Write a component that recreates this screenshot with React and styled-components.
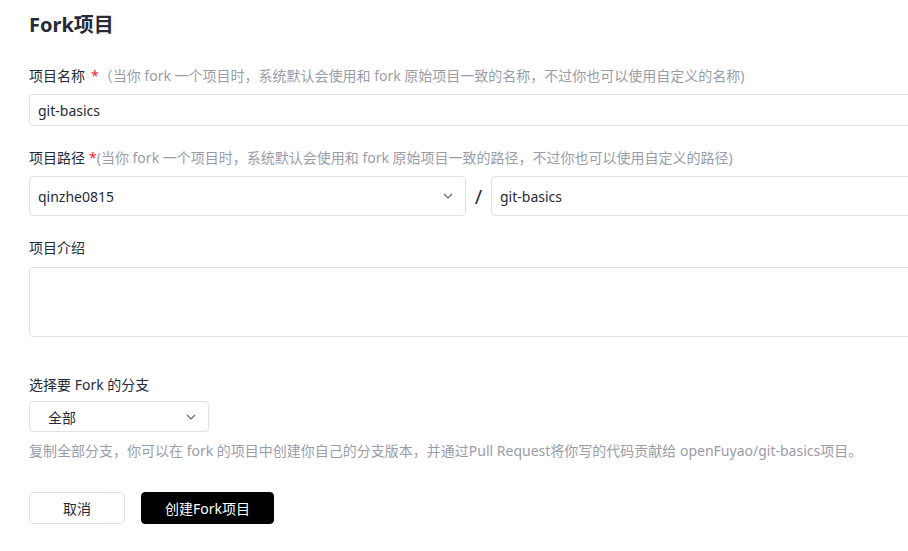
import React from 'react'
import styled, { createGlobalStyle } from 'styled-components'

const GlobalStyle = createGlobalStyle`
  html, body {
    margin: 0;
    padding: 0;
    background: #fff;
    overflow: hidden;
  }
  body {
    font-family: "Noto Sans", "Noto Sans CJK SC", sans-serif;
    color: #252b3a;
  }
`

const Page = styled.div`
  padding: 10px 0 0 29px;
  width: 980px;
`

const Title = styled.h2`
  margin: 0 0 26px;
  font-size: 20px;
  font-weight: 700;
  line-height: 30px;
  color: #252b3a;
`

const Field = styled.div`
  margin-bottom: ${({ gap = 22 }) => gap}px;
`

const Label = styled.div`
  font-size: 14px;
  line-height: 20px;
  margin-bottom: ${({ mb = 8 }) => mb}px;
  color: #252b3a;
  white-space: nowrap;
`

const Star = styled.span`
  color: #f5222d;
  margin-left: ${({ spaced }) => (spaced ? '6px' : '4px')};
`

const Hint = styled.span`
  color: #9a9caa;
`

const Input = styled.div`
  box-sizing: border-box;
  height: ${({ h = 32 }) => h}px;
  border: 1px solid #dfe1e8;
  border-radius: 4px;
  padding: 0 8px;
  display: flex;
  align-items: center;
  font-size: 14px;
  color: #252b3a;
  flex: ${({ grow }) => (grow ? '1' : 'none')};
  width: ${({ w }) => (w ? `${w}px` : 'auto')};
`

const Row = styled.div`
  display: flex;
  align-items: center;
`

const Slash = styled.span`
  width: 25px;
  text-align: center;
  font-size: 20px;
  color: #252b3a;
`

const Select = styled(Input)`
  justify-content: space-between;
  padding: 0 12px 0 ${({ pl = 8 }) => pl}px;
`

const Arrow = () => (
  <svg width="10" height="6" viewBox="0 0 10 6" fill="none">
    <path d="M1 1l4 4 4-4" stroke="#5e6270" strokeWidth="1.1" />
  </svg>
)

const TextArea = styled.div`
  box-sizing: border-box;
  height: 70px;
  border: 1px solid #dfe1e8;
  border-radius: 4px;
`

const Help = styled.div`
  margin-top: 9px;
  font-size: 14px;
  line-height: 20px;
  color: #9a9caa;
  white-space: nowrap;
`

const Actions = styled.div`
  display: flex;
  gap: 16px;
  margin-top: 31px;
`

const Button = styled.button`
  box-sizing: border-box;
  height: 32px;
  width: ${({ w }) => w}px;
  border-radius: 4px;
  font-family: inherit;
  font-size: 14px;
  cursor: pointer;
  border: 1px solid ${({ primary }) => (primary ? '#000' : '#dfe1e8')};
  background: ${({ primary }) => (primary ? '#000' : '#fff')};
  color: ${({ primary }) => (primary ? '#fff' : '#252b3a')};
`

export default function App() {
  return (
    <>
      <GlobalStyle />
      <Page>
        <Title>Fork项目</Title>
        <Field gap={22}>
          <Label>
            项目名称<Star spaced>*</Star>
            <Hint>（当你 fork 一个项目时，系统默认会使用和 fork 原始项目一致的名称，不过你也可以使用自定义的名称)</Hint>
          </Label>
          <Input>git-basics</Input>
        </Field>
        <Field gap={22}>
          <Label>
            项目路径<Star>*</Star>
            <Hint>(当你 fork 一个项目时，系统默认会使用和 fork 原始项目一致的路径，不过你也可以使用自定义的路径)</Hint>
          </Label>
          <Row>
            <Select h={40} w={437}>
              qinzhe0815
              <Arrow />
            </Select>
            <Slash>/</Slash>
            <Input h={40} grow>git-basics</Input>
          </Row>
        </Field>
        <Field gap={38}>
          <Label mb={9}>项目介绍</Label>
          <TextArea />
        </Field>
        <Field gap={0}>
          <Label mb={6}>选择要 Fork 的分支</Label>
          <Select h={31} w={180} pl={18}>
            全部
            <Arrow />
          </Select>
          <Help>复制全部分支，你可以在 fork 的项目中创建你自己的分支版本，并通过Pull Request将你写的代码贡献给 openFuyao/git-basics项目。</Help>
        </Field>
        <Actions>
          <Button w={96}>取消</Button>
          <Button primary w={133}>创建Fork项目</Button>
        </Actions>
      </Page>
    </>
  )
}
